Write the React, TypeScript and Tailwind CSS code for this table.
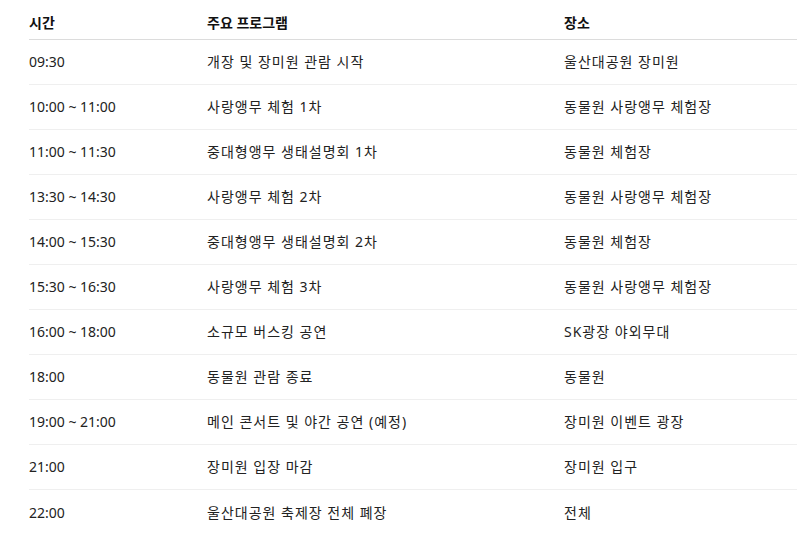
import React from "react";

const rows: [string, string, string][] = [
  ["09:30", "개장 및 장미원 관람 시작", "울산대공원 장미원"],
  ["10:00 ~ 11:00", "사랑앵무 체험 1차", "동물원 사랑앵무 체험장"],
  ["11:00 ~ 11:30", "중대형앵무 생태설명회 1차", "동물원 체험장"],
  ["13:30 ~ 14:30", "사랑앵무 체험 2차", "동물원 사랑앵무 체험장"],
  ["14:00 ~ 15:30", "중대형앵무 생태설명회 2차", "동물원 체험장"],
  ["15:30 ~ 16:30", "사랑앵무 체험 3차", "동물원 사랑앵무 체험장"],
  ["16:00 ~ 18:00", "소규모 버스킹 공연", "SK광장 야외무대"],
  ["18:00", "동물원 관람 종료", "동물원"],
  ["19:00 ~ 21:00", "메인 콘서트 및 야간 공연 (예정)", "장미원 이벤트 광장"],
  ["21:00", "장미원 입장 마감", "장미원 입구"],
  ["22:00", "울산대공원 축제장 전체 폐장", "전체"],
];

export default function App() {
  return (
    <div
      className="w-[802px] h-[538px] bg-white overflow-hidden"
      style={{ fontFamily: "'Noto Sans', 'Noto Sans CJK KR', sans-serif" }}
    >
      <div className="ml-[29px] w-[768px]">
        <div className="grid grid-cols-[178px_357px_1fr] h-[40px] pt-[13px] border-b border-[#dcdcdc] text-[14px] leading-[20px] font-bold text-[#111]">
          <div>시간</div>
          <div>주요 프로그램</div>
          <div>장소</div>
        </div>
        {rows.map((r, i) => (
          <div
            key={i}
            className={`grid grid-cols-[178px_357px_1fr] h-[45px] items-center leading-[20px] text-[#222] ${
              i < rows.length - 1 ? "border-b border-[#efefef]" : ""
            }`}
          >
            <div className="text-[14px]">{r[0]}</div>
            <div className="text-[14px] tracking-[1px]">{r[1]}</div>
            <div className="text-[14px] tracking-[1px]">{r[2]}</div>
          </div>
        ))}
      </div>
    </div>
  );
}
